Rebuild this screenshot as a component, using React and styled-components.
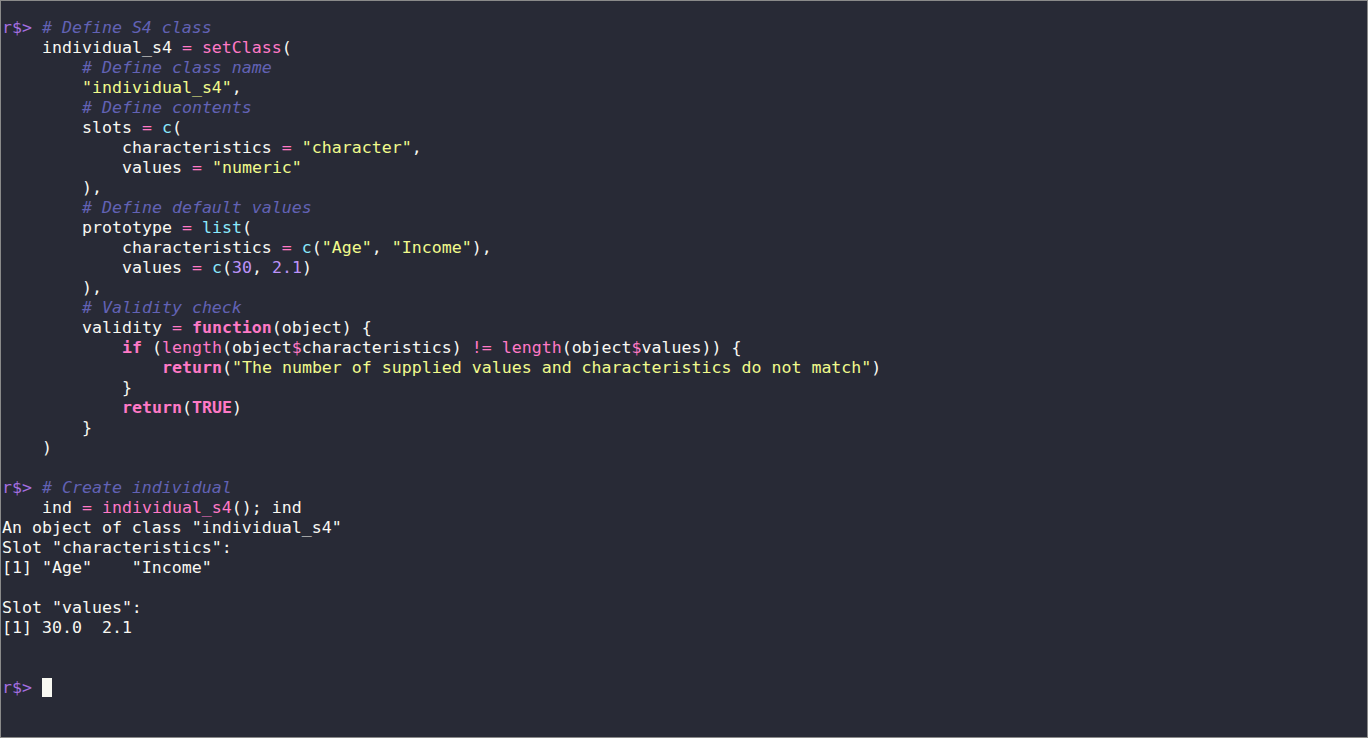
import React from 'react';
import styled, { createGlobalStyle, css } from 'styled-components';

const GlobalStyle = createGlobalStyle`
  html, body {
    margin: 0;
    padding: 0;
    background: #282a36;
  }
  * {
    box-sizing: border-box;
  }
`;

const Terminal = styled.div`
  width: 1368px;
  height: 738px;
  background-color: #282a36;
  border: 1px solid #8a8a8a;
  padding: 17px 1px 0 1px;
  font-family: 'DejaVu Sans Mono', 'Liberation Mono', monospace;
  font-size: 16.6px;
  line-height: 20px;
  color: #f8f8f2;
  overflow: hidden;
`;

const Line = styled.div`
  height: 20px;
  white-space: pre;
  padding-left: ${({ indent }) => (indent || 0) * 10}px;
`;

const colors = {
  prompt: '#a46fe0',
  comment: '#6262b4',
  fn: '#ff79c6',
  op: '#ff79c6',
  kw: '#ff79c6',
  str: '#f1fa8c',
  num: '#bd93f9',
  base: '#8be9fd',
};

const Tok = styled.span`
  color: ${({ kind }) => colors[kind] || '#f8f8f2'};
  ${({ kind }) =>
    kind === 'comment' &&
    css`
      font-style: italic;
    `}
  ${({ kind }) =>
    kind === 'kw' &&
    css`
      font-weight: bold;
    `}
`;

const Cursor = styled.span`
  display: inline-block;
  width: 10px;
  height: 19px;
  background: #f8f8f2;
  vertical-align: -4px;
`;

const P = () => <Tok kind="prompt">r$&gt; </Tok>;

const App = () => {
  return (
    <>
      <GlobalStyle />
      <Terminal>
        <Line>
          <P />
          <Tok kind="comment"># Define S4 class</Tok>
        </Line>
        <Line indent={4}>
          individual_s4 <Tok kind="op">=</Tok> <Tok kind="fn">setClass</Tok>(
        </Line>
        <Line indent={8}>
          <Tok kind="comment"># Define class name</Tok>
        </Line>
        <Line indent={8}>
          <Tok kind="str">"individual_s4"</Tok>,
        </Line>
        <Line indent={8}>
          <Tok kind="comment"># Define contents</Tok>
        </Line>
        <Line indent={8}>
          slots <Tok kind="op">=</Tok> <Tok kind="base">c</Tok>(
        </Line>
        <Line indent={12}>
          characteristics <Tok kind="op">=</Tok> <Tok kind="str">"character"</Tok>,
        </Line>
        <Line indent={12}>
          values <Tok kind="op">=</Tok> <Tok kind="str">"numeric"</Tok>
        </Line>
        <Line indent={8}>),</Line>
        <Line indent={8}>
          <Tok kind="comment"># Define default values</Tok>
        </Line>
        <Line indent={8}>
          prototype <Tok kind="op">=</Tok> <Tok kind="base">list</Tok>(
        </Line>
        <Line indent={12}>
          characteristics <Tok kind="op">=</Tok> <Tok kind="base">c</Tok>(
          <Tok kind="str">"Age"</Tok>, <Tok kind="str">"Income"</Tok>),
        </Line>
        <Line indent={12}>
          values <Tok kind="op">=</Tok> <Tok kind="base">c</Tok>(<Tok kind="num">30</Tok>,{' '}
          <Tok kind="num">2.1</Tok>)
        </Line>
        <Line indent={8}>),</Line>
        <Line indent={8}>
          <Tok kind="comment"># Validity check</Tok>
        </Line>
        <Line indent={8}>
          validity <Tok kind="op">=</Tok> <Tok kind="kw">function</Tok>(object) {'{'}
        </Line>
        <Line indent={12}>
          <Tok kind="kw">if</Tok> (<Tok kind="fn">length</Tok>(object<Tok kind="op">$</Tok>
          characteristics) <Tok kind="op">!=</Tok> <Tok kind="fn">length</Tok>(object
          <Tok kind="op">$</Tok>values)) {'{'}
        </Line>
        <Line indent={16}>
          <Tok kind="kw">return</Tok>(
          <Tok kind="str">"The number of supplied values and characteristics do not match"</Tok>)
        </Line>
        <Line indent={12}>{'}'}</Line>
        <Line indent={12}>
          <Tok kind="kw">return</Tok>(<Tok kind="kw">TRUE</Tok>)
        </Line>
        <Line indent={8}>{'}'}</Line>
        <Line indent={4}>)</Line>
        <Line />
        <Line>
          <P />
          <Tok kind="comment"># Create individual</Tok>
        </Line>
        <Line indent={4}>
          ind <Tok kind="op">=</Tok> <Tok kind="fn">individual_s4</Tok>(); ind
        </Line>
        <Line>An object of class "individual_s4"</Line>
        <Line>Slot "characteristics":</Line>
        <Line>[1] "Age"    "Income"</Line>
        <Line />
        <Line>Slot "values":</Line>
        <Line>[1] 30.0  2.1</Line>
        <Line />
        <Line />
        <Line>
          <P />
          <Cursor />
        </Line>
      </Terminal>
    </>
  );
};

export default App;
